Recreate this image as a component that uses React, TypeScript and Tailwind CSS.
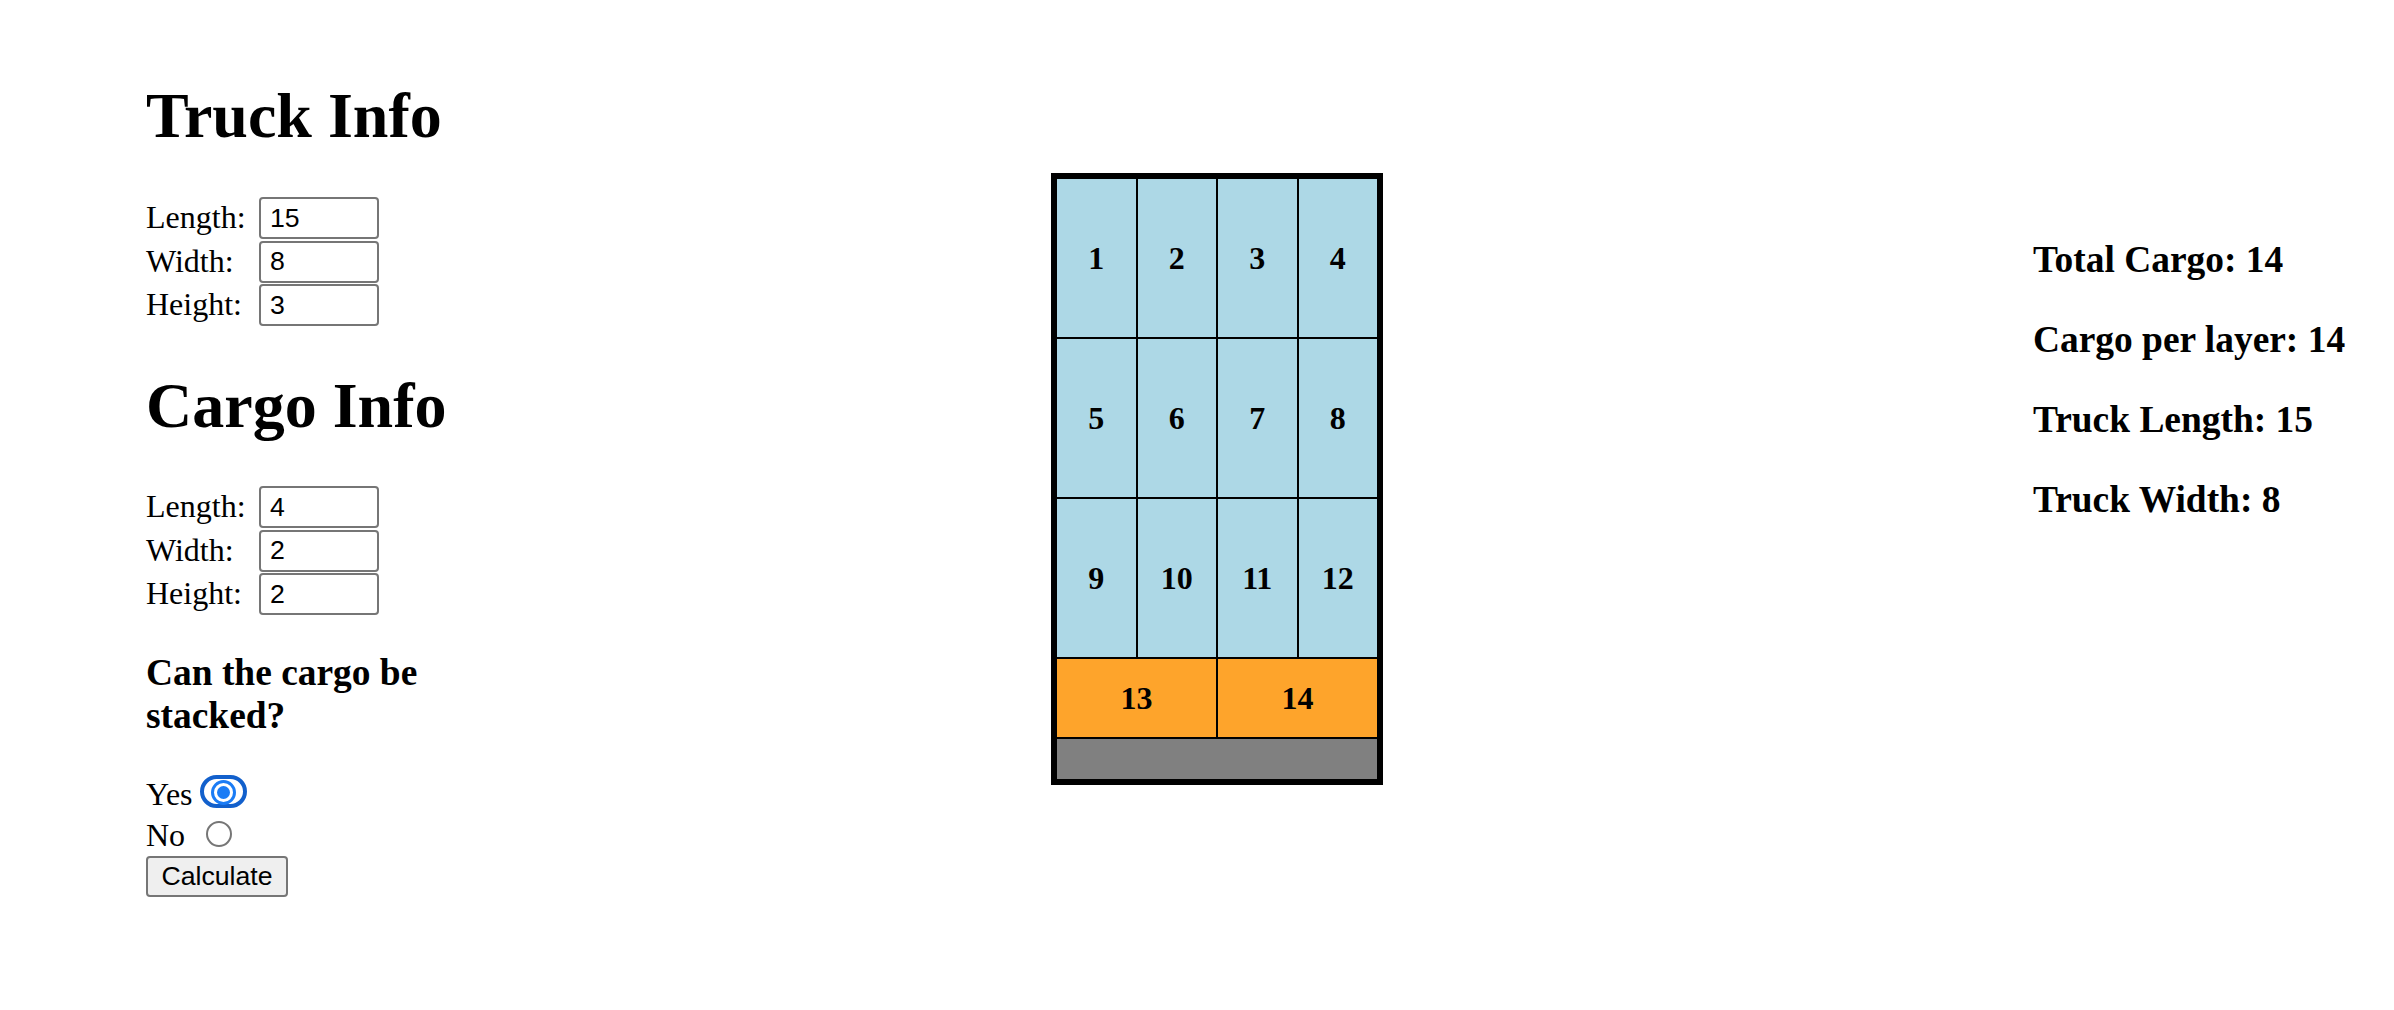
import React from 'react';

const truckFields = [
  { label: 'Length:', value: '15' },
  { label: 'Width:', value: '8' },
  { label: 'Height:', value: '3' },
];

const cargoFields = [
  { label: 'Length:', value: '4' },
  { label: 'Width:', value: '2' },
  { label: 'Height:', value: '2' },
];

const stats = ['Total Cargo: 14', 'Cargo per layer: 14', 'Truck Length: 15', 'Truck Width: 8'];

const FieldGrid: React.FC<{ fields: { label: string; value: string }[] }> = ({ fields }) => (
  <div className="grid grid-cols-[113px_120px] gap-y-[1.5px]">
    {fields.map((f) => (
      <React.Fragment key={f.label}>
        <label className="text-[32px] leading-[40px] h-[42px]">{f.label}</label>
        <input
          type="text"
          defaultValue={f.value}
          className="h-[42px] w-[120px] border-2 border-[#767676] rounded-[4px] px-[9px] text-[26.67px] font-['Liberation_Sans',Arial,sans-serif] text-black bg-white outline-none"
        />
      </React.Fragment>
    ))}
  </div>
);

const Cell: React.FC<{ n: number; className: string }> = ({ n, className }) => (
  <div className={`flex items-center justify-center text-[32px] font-bold ${className}`}>{n}</div>
);

const App: React.FC = () => (
  <div className="flex w-full h-[1010px] bg-white text-black font-['Liberation_Serif','Times_New_Roman',serif]">
    {/* form column */}
    <div className="ml-[146px] w-[300px] pt-[79px] flex flex-col">
      <h1 className="text-[64px] leading-[74px] font-bold whitespace-nowrap">Truck Info</h1>
      <div className="mt-[44px]">
        <FieldGrid fields={truckFields} />
      </div>
      <h1 className="mt-[43px] text-[64px] leading-[74px] font-bold whitespace-nowrap">Cargo Info</h1>
      <div className="mt-[43px]">
        <FieldGrid fields={cargoFields} />
      </div>
      <h3 className="mt-[36px] text-[37.44px] leading-[43px] font-bold">Can the cargo be stacked?</h3>
      <div className="mt-[37px] flex flex-col">
        <div className="h-[41px] flex items-start text-[32px] leading-[40px]">
          <span>Yes</span>
          <span className="relative ml-[18px] mt-[6px] w-[25px] h-[25px]">
            <span className="absolute left-[-11px] right-[-11px] top-[-5px] bottom-[-3px] border-4 border-[#1260cc] rounded-[17px]" />
            <span className="absolute inset-0 rounded-full border-[3px] border-[#1b7cf5] bg-white flex items-center justify-center">
              <span className="w-[13px] h-[13px] rounded-full bg-[#1b7cf5]" />
            </span>
          </span>
        </div>
        <div className="h-[41px] flex items-start text-[32px] leading-[40px]">
          <span>No</span>
          <span className="ml-[21px] mt-[6px] w-[26px] h-[26px] rounded-full border-2 border-[#767676] bg-white" />
        </div>
      </div>
      <button className="h-[41px] w-[142px] border-2 border-[#767676] rounded-[4px] bg-[#efefef] text-[26.67px] leading-none font-['Liberation_Sans',Arial,sans-serif] text-black">
        Calculate
      </button>
    </div>

    {/* truck layout */}
    <div className="ml-[605px] mt-[173px] w-[332px] h-[612px] border-[6px] border-black bg-black flex flex-col gap-[2px]">
      {[0, 1, 2].map((r) => (
        <div key={r} className="h-[158px] grid grid-cols-4 gap-[2px]">
          {[1, 2, 3, 4].map((c) => (
            <Cell key={c} n={r * 4 + c} className="bg-[#add8e6]" />
          ))}
        </div>
      ))}
      <div className="h-[78px] grid grid-cols-2 gap-[2px]">
        <Cell n={13} className="bg-[#fea42b]" />
        <Cell n={14} className="bg-[#fea42b]" />
      </div>
      <div className="flex-1 bg-[#808080]" />
    </div>

    {/* summary */}
    <div className="ml-[650px] pt-[238px] flex flex-col gap-[37px]">
      {stats.map((s) => (
        <h3 key={s} className="text-[37.44px] leading-[43px] font-bold whitespace-nowrap">
          {s}
        </h3>
      ))}
    </div>
  </div>
);

export default App;
